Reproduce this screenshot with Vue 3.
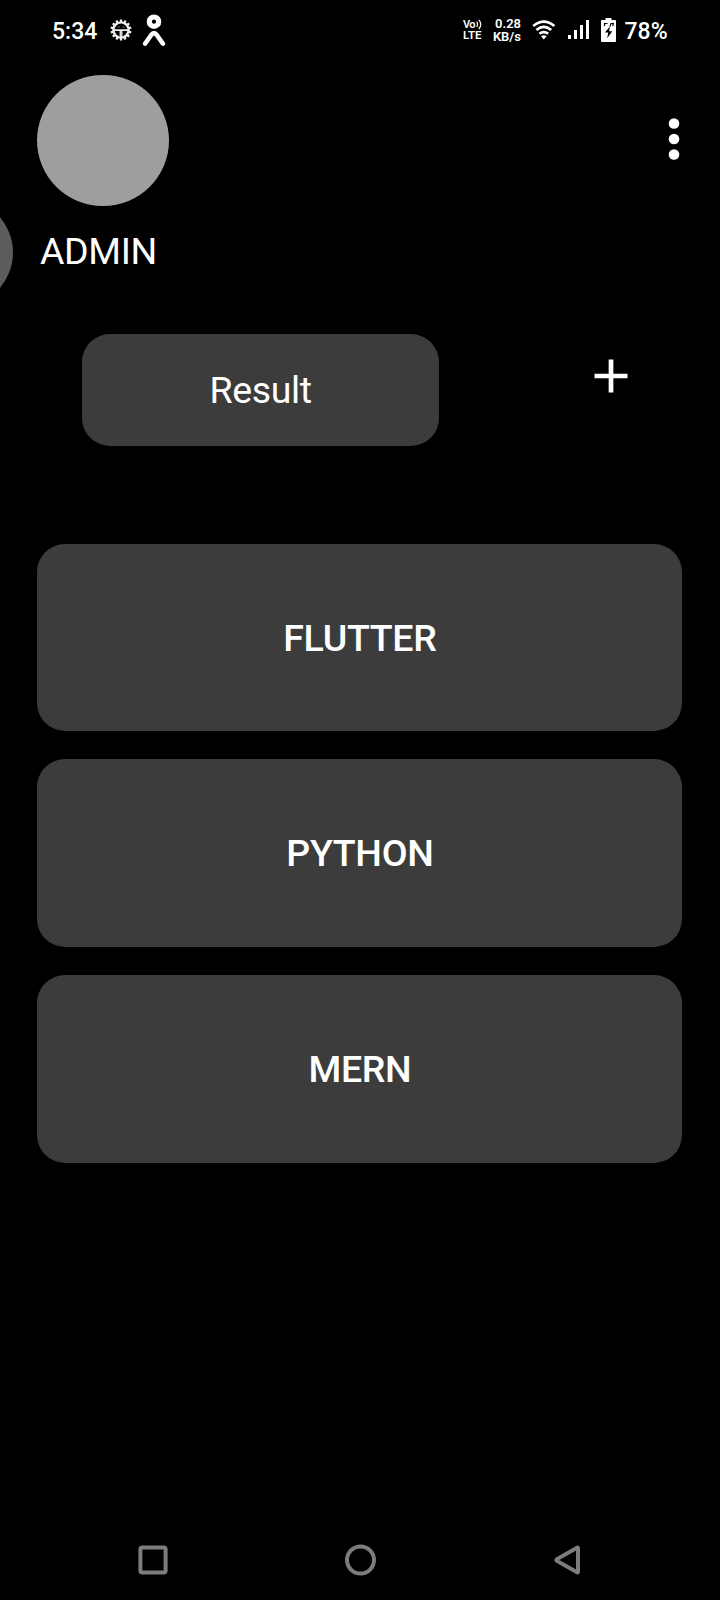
<script setup>
const courses = ['FLUTTER', 'PYTHON', 'MERN']
const teeth = Array.from({ length: 14 }, (_, i) => (i * 360) / 14)
</script>

<template>
  <div class="screen">
    <header class="status">
      <span class="clock">5:34</span>
      <svg class="gear" width="22" height="22" viewBox="0 0 22 22" fill="none" stroke="#eee">
        <circle cx="11" cy="11" r="7.6" stroke-width="2.4" />
        <path v-for="a in teeth" :key="a" d="M11 3V.5" stroke-width="2.3" :transform="`rotate(${a} 11 11)`" />
        <path d="M4 11.2H18M11 11v7" stroke-width="1.8" />
        <path d="M9.5 12v6M12.5 12v6" stroke="#999" stroke-width=".7" />
        <path d="M7.5 8h2M12.5 8h2" stroke="#777" stroke-width="1" />
      </svg>
      <svg class="person" width="24" height="34" viewBox="0 0 24 34" fill="none" stroke="#fff">
        <circle cx="12" cy="8.7" r="4.7" stroke-width="5.2" />
        <path d="M3.2 30.5 9.2 22Q12 18.3 14.8 22L20.8 30.5" stroke-width="4.6" stroke-linecap="round" />
      </svg>
      <span class="spacer"></span>
      <span class="volte">
        <span class="vo">Vo<svg width="6" height="11" viewBox="0 0 6 11" fill="none" stroke="#fff" stroke-width="1.2"><path d="M.6 2.6Q2.6 5.2.6 8M2.8.8Q6.800 5.200 2.800 10" /></svg></span>
        <span>LTE</span>
      </span>
      <span class="speed"><span>0.28</span><span>KB/s</span></span>
      <svg class="wifi" width="24" height="20" viewBox="0 0 24 20" fill="none" stroke="#fff" stroke-width="2.6">
        <path d="M1.2 6Q11.8-2.8 22.4 6" />
        <path d="M4.4 10Q11.8 3.9 19.2 10" />
        <path d="M7.4 13.8Q11.8 10.3 16.2 13.8" />
        <path d="M9 16.2Q11.8 14.4 14.6 16.2L11.8 19.4z" fill="#fff" stroke="none" />
      </svg>
      <svg class="signal" width="22" height="20" viewBox="0 0 22 20" fill="#fff">
        <path d="M0 15h3v4H0zM6 10h3v9H6zM12 5h3v14h-3zM18 0h3v19h-3z" />
      </svg>
      <svg class="battery" width="16" height="24" viewBox="0 0 16 24">
        <path d="M4.5 0h6v2H14q1 0 1 1v20q0 1-1 1H1q-1 0-1-1V3q0-1 1-1h3.5z" fill="#fff" />
        <path d="M8.8 8.5 4 14.6h3.2L6.2 20.3 11.3 13.3H8.2z" fill="#000" />
        <path d="M3 5.5h3.5M3.5 5v3M9 8.5 10 5.5h3M12 5v3" stroke="#000" stroke-width="1.2" fill="none" />
      </svg>
      <span class="percent">78%</span>
    </header>

    <section class="profile">
      <div class="avatar"></div>
      <svg class="more" width="12" height="44" viewBox="0 0 12 44" fill="#fff">
        <circle cx="6" cy="6.5" r="5.3" /><circle cx="6" cy="22" r="5.3" /><circle cx="6" cy="37.5" r="5.3" />
      </svg>
    </section>
    <div class="name">ADMIN</div>

    <section class="actions">
      <button class="result">Result</button>
      <svg class="plus" width="34" height="34" viewBox="0 0 34 34" stroke="#fff" stroke-width="4.7">
        <path d="M.5 17H33.5M17 .5V33.5" />
      </svg>
    </section>

    <main class="courses">
      <article v-for="c in courses" :key="c" class="course">{{ c }}</article>
    </main>

    <nav class="nav">
      <svg width="32" height="32" viewBox="0 0 32 32"><rect x="3.4" y="3.4" width="25.2" height="25.2" rx="2" /></svg>
      <svg width="32" height="32" viewBox="0 0 32 32"><circle cx="16.5" cy="16" r="13.5" /></svg>
      <svg width="32" height="32" viewBox="0 0 32 32"><path d="M27 4.2V27.8Q27 28.8 26 28.3L6 16.9Q4.7 16 6 15.1L26 3.7Q27 3.2 27 4.2z" /></svg>
    </nav>

    <div class="bubble"></div>
  </div>
</template>

<style>
body { background: #000; overflow: hidden; }
</style>

<style scoped>
.screen {
  position: relative;
  width: 720px;
  height: 1600px;
  box-sizing: border-box;
  overflow: hidden;
  background: #000;
  color: #fff;
  font-family: Roboto, "Noto Sans", sans-serif;
  display: flex;
  flex-direction: column;
}
.status {
  flex: none;
  height: 75px;
  padding: 0 0 0 52px;
  box-sizing: border-box;
  display: flex;
  align-items: flex-start;
}
.status svg { flex: none; }
.clock, .percent { font-size: 23px; font-weight: 500; line-height: 28px; margin-top: 18px; }
.clock { width: 58px; }
.gear { margin-top: 19px; }
.person { margin: 13px 0 0 10px; }
.spacer { flex: 1; }
.volte { width: 30px; margin-top: 19px; font-size: 11.5px; font-weight: 600; line-height: 11px; display: flex; flex-direction: column; }
.vo { display: flex; height: 11px; font-size: 11px; letter-spacing: -.7px; }
.vo svg { margin-left: 1px; }
.speed { width: 28px; margin-top: 17px; font-size: 13px; font-weight: 600; line-height: 13px; display: flex; flex-direction: column; align-items: flex-end; }
.wifi { margin: 20px 0 0 11px; }
.signal { margin: 20px 0 0 12px; }
.battery { margin: 18px 0 0 11px; }
.percent { width: 95.5px; margin-left: 7.5px; }
.profile { display: flex; justify-content: space-between; padding: 0 39.6px 0 37.4px; height: 131.25px; }
.avatar { width: 131.25px; height: 131.25px; border-radius: 50%; background: #9e9e9e; }
.more { margin-top: 42px; }
.name { margin: 23px 0 0 40px; height: 44px; font-size: 37.5px; line-height: 44px; letter-spacing: -.35px; }
.actions { display: flex; margin-top: 60.5px; padding-left: 82.4px; height: 112.5px; }
.result {
  width: 356.25px;
  height: 112.5px;
  padding: 0;
  border: 0;
  border-radius: 28px;
  background: #3c3c3c;
  color: #fff;
  font: 400 37.5px Roboto, sans-serif;
  letter-spacing: -.4px;
}
.plus { margin: 25.2px 0 0 155.5px; }
.courses { margin: 97.5px 37.6px 0 37.4px; display: flex; flex-direction: column; gap: 28.125px; }
.course {
  height: 187.5px;
  border-radius: 28px;
  background: #3c3c3c;
  display: flex;
  align-items: center;
  justify-content: center;
  font-size: 37.5px;
  font-weight: 500;
  letter-spacing: -.3px;
}
.nav { margin: auto 136.6px 24px 137.4px; display: flex; justify-content: space-between; }
.nav svg { fill: none; stroke: #7c7c7c; stroke-width: 4; }
.bubble {
  position: absolute;
  left: -96px;
  top: 198px;
  width: 109px;
  height: 109px;
  border-radius: 50%;
  background: #5c5c5c;
}
</style>
